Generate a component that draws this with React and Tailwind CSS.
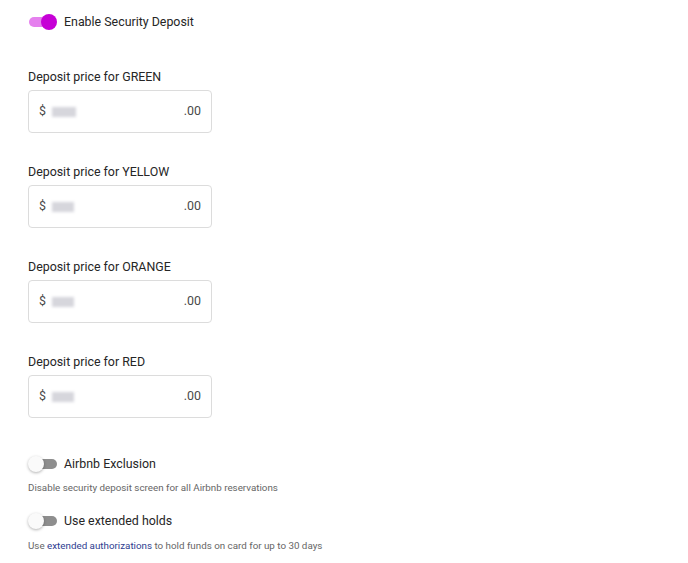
import React from "react";

function Toggle({ on }) {
  return (
    <div className="relative w-[30px] h-[16px] flex items-center shrink-0">
      <div className={`w-[24px] h-[10px] rounded-full ${on ? "ml-[1px] bg-[#e580ee]" : "ml-[5px] bg-[#8e8e8e]"}`} />
      <div
        className={`absolute top-0 w-[16px] h-[16px] rounded-full ${
          on ? "left-[13px] bg-[#c600d6]" : "left-0 bg-[#fafafa] shadow-[0_1px_3px_rgba(0,0,0,0.3)]"
        }`}
      />
    </div>
  );
}

function PriceField({ label, blurW }) {
  return (
    <div className="flex flex-col">
      <div className="text-[12.4px] leading-[16px] text-[#262626]">{label}</div>
      <div className="mt-[5px] w-[184px] h-[43px] rounded-[4px] border border-[#dcdcdc] flex items-center px-[10px] text-[12.4px] text-[#4a4a4a]">
        <span>$</span>
        <span className={`ml-[6px] h-[10px] ${blurW} bg-[#d6d6dc] blur-[1.5px]`} />
        <span className="ml-auto">.00</span>
      </div>
    </div>
  );
}

export default function App() {
  return (
    <div
      className="w-[688px] h-[563px] bg-white pl-[28px] pt-[14px]"
      style={{ fontFamily: "Roboto, 'Liberation Sans', sans-serif" }}
    >
      <div className="flex items-center h-[16px]">
        <Toggle on />
        <span className="ml-[6px] text-[12.4px] text-[#262626]">Enable Security Deposit</span>
      </div>
      <div className="mt-[39px] flex flex-col gap-[31px]">
        <PriceField label="Deposit price for GREEN" blurW="w-[24px]" />
        <PriceField label="Deposit price for YELLOW" blurW="w-[22px]" />
        <PriceField label="Deposit price for ORANGE" blurW="w-[22px]" />
        <PriceField label="Deposit price for RED" blurW="w-[22px]" />
      </div>
      <div className="mt-[38px] flex items-center h-[16px]">
        <Toggle />
        <span className="ml-[6px] text-[12.4px] text-[#262626]">Airbnb Exclusion</span>
      </div>
      <div className="mt-[8px] text-[9.8px] leading-[15px] text-[#666]">
        Disable security deposit screen for all Airbnb reservations
      </div>
      <div className="mt-[18px] flex items-center h-[16px]">
        <Toggle />
        <span className="ml-[6px] text-[12.4px] text-[#262626]">Use extended holds</span>
      </div>
      <div className="mt-[9px] text-[9.8px] leading-[15px] text-[#666]">
        Use <span className="text-[#2e3d8f]">extended authorizations</span> to hold funds on card for up to 30 days
      </div>
    </div>
  );
}
